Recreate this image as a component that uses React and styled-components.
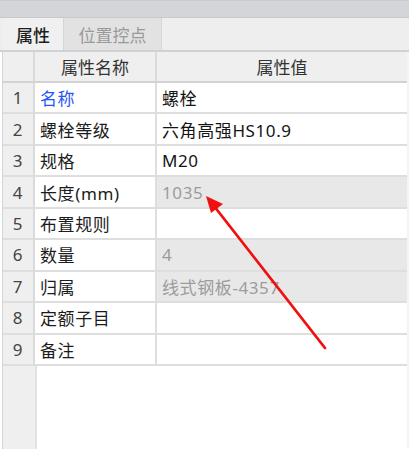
import styled, { createGlobalStyle } from "styled-components";

const GlobalStyle = createGlobalStyle`
    html, body {
        margin: 0;
        padding: 0;
        background: #ffffff;
    }
    body {
        font-family: "Noto Sans", "Noto Sans CJK SC", sans-serif;
    }
`;

const rows = [
    { name: "名称", value: "螺栓", link: true },
    { name: "螺栓等级", value: "六角高强HS10.9" },
    { name: "规格", value: "M20" },
    { name: "长度(mm)", value: "1035", locked: true },
    { name: "布置规则", value: "" },
    { name: "数量", value: "4", locked: true },
    { name: "归属", value: "线式钢板-4357", locked: true },
    { name: "定额子目", value: "" },
    { name: "备注", value: "" },
];

const App = () => {
    return (
        <>
            <GlobalStyle />
            <Panel>
                <TitleBar />
                <TabBar>
                    <Tab active>属性</Tab>
                    <Tab>位置控点</Tab>
                </TabBar>
                <Body>
                    <Grid>
                        <HeadCell />
                        <HeadCell>属性名称</HeadCell>
                        <HeadCell>属性值</HeadCell>
                        {rows.map((row, i) => (
                            <Row key={i}>
                                <IndexCell>{i + 1}</IndexCell>
                                <NameCell link={row.link}>{row.name}</NameCell>
                                <ValueCell locked={row.locked}>{row.value}</ValueCell>
                            </Row>
                        ))}
                    </Grid>
                    <Filler>
                        <FillerIndex />
                    </Filler>
                </Body>
                <Arrow viewBox="0 0 409 449" width="409" height="449">
                    <line x1="325" y1="348" x2="214" y2="206" stroke="#f01010" strokeWidth="2.8" strokeLinecap="round" />
                    <polygon points="206,196 223,204 211,213" fill="#f01010" />
                </Arrow>
            </Panel>
        </>
    );
};

const Panel = styled.div`
    position: relative;
    width: 409px;
    height: 449px;
    display: flex;
    flex-direction: column;
    background: #ffffff;
    overflow: hidden;
`;
const TitleBar = styled.div`
    height: 16px;
    background: #d4d5d9;
    border-top: 1px solid #c9cbcf;
    border-bottom: 1px solid #c6c8cc;
`;
const TabBar = styled.div`
    height: 32px;
    display: flex;
    padding-left: 3px;
    background: #eeeeee;
    border-bottom: 2px solid #cfd1d3;
`;
const Tab = styled.div`
    width: ${(p) => (p.active ? "60px" : "97px")};
    display: flex;
    align-items: center;
    justify-content: center;
    font-size: 17px;
    font-weight: ${(p) => (p.active ? 500 : 400)};
    color: ${(p) => (p.active ? "#1e1e1e" : "#9a9a9a")};
    background: ${(p) => (p.active ? "#f0f0f0" : "#e2e2e2")};
    border-right: 1px solid #d6d6d6;
`;
const Body = styled.div`
    flex: 1;
    display: flex;
    flex-direction: column;
    margin-left: 2px;
    border-left: 1px solid #d4d4d4;
    border-right: 2px solid #f4f4f4;
`;
const Grid = styled.div`
    display: grid;
    grid-template-columns: 32px 122px 1fr;
    grid-template-rows: 31px;
    grid-auto-rows: 31.45px;
`;
const HeadCell = styled.div`
    display: flex;
    align-items: center;
    justify-content: center;
    font-size: 17px;
    color: #333333;
    background: #efefef;
    border-right: 2px solid #dadada;
    border-bottom: 2px solid #d2d2d2;
    &:nth-child(3) {
        border-right: none;
    }
`;
const Row = styled.div`
    display: contents;
`;
const Cell = styled.div`
    display: flex;
    align-items: center;
    font-size: 17px;
    letter-spacing: 0.6px;
    border-bottom: 2px solid #dedede;
    white-space: nowrap;
    overflow: hidden;
`;
const IndexCell = styled(Cell)`
    justify-content: center;
    color: #444444;
    background: #efefef;
    border-right: 2px solid #dadada;
`;
const NameCell = styled(Cell)`
    padding-left: 5px;
    color: ${(p) => (p.link ? "#2a55f5" : "#1c1c1c")};
    background: #ffffff;
    border-right: 2px solid #dedede;
`;
const ValueCell = styled(Cell)`
    padding-left: 5px;
    color: ${(p) => (p.locked ? "#9c9c9c" : "#151515")};
    background: ${(p) => (p.locked ? "#e8e8e8" : "#ffffff")};
`;
const Filler = styled.div`
    flex: 1;
    display: flex;
`;
const FillerIndex = styled.div`
    width: 32px;
    background: #efefef;
    border-right: 2px solid #e2e2e2;
`;
const Arrow = styled.svg`
    position: absolute;
    left: 0;
    top: 0;
    pointer-events: none;
`;

export default App;
